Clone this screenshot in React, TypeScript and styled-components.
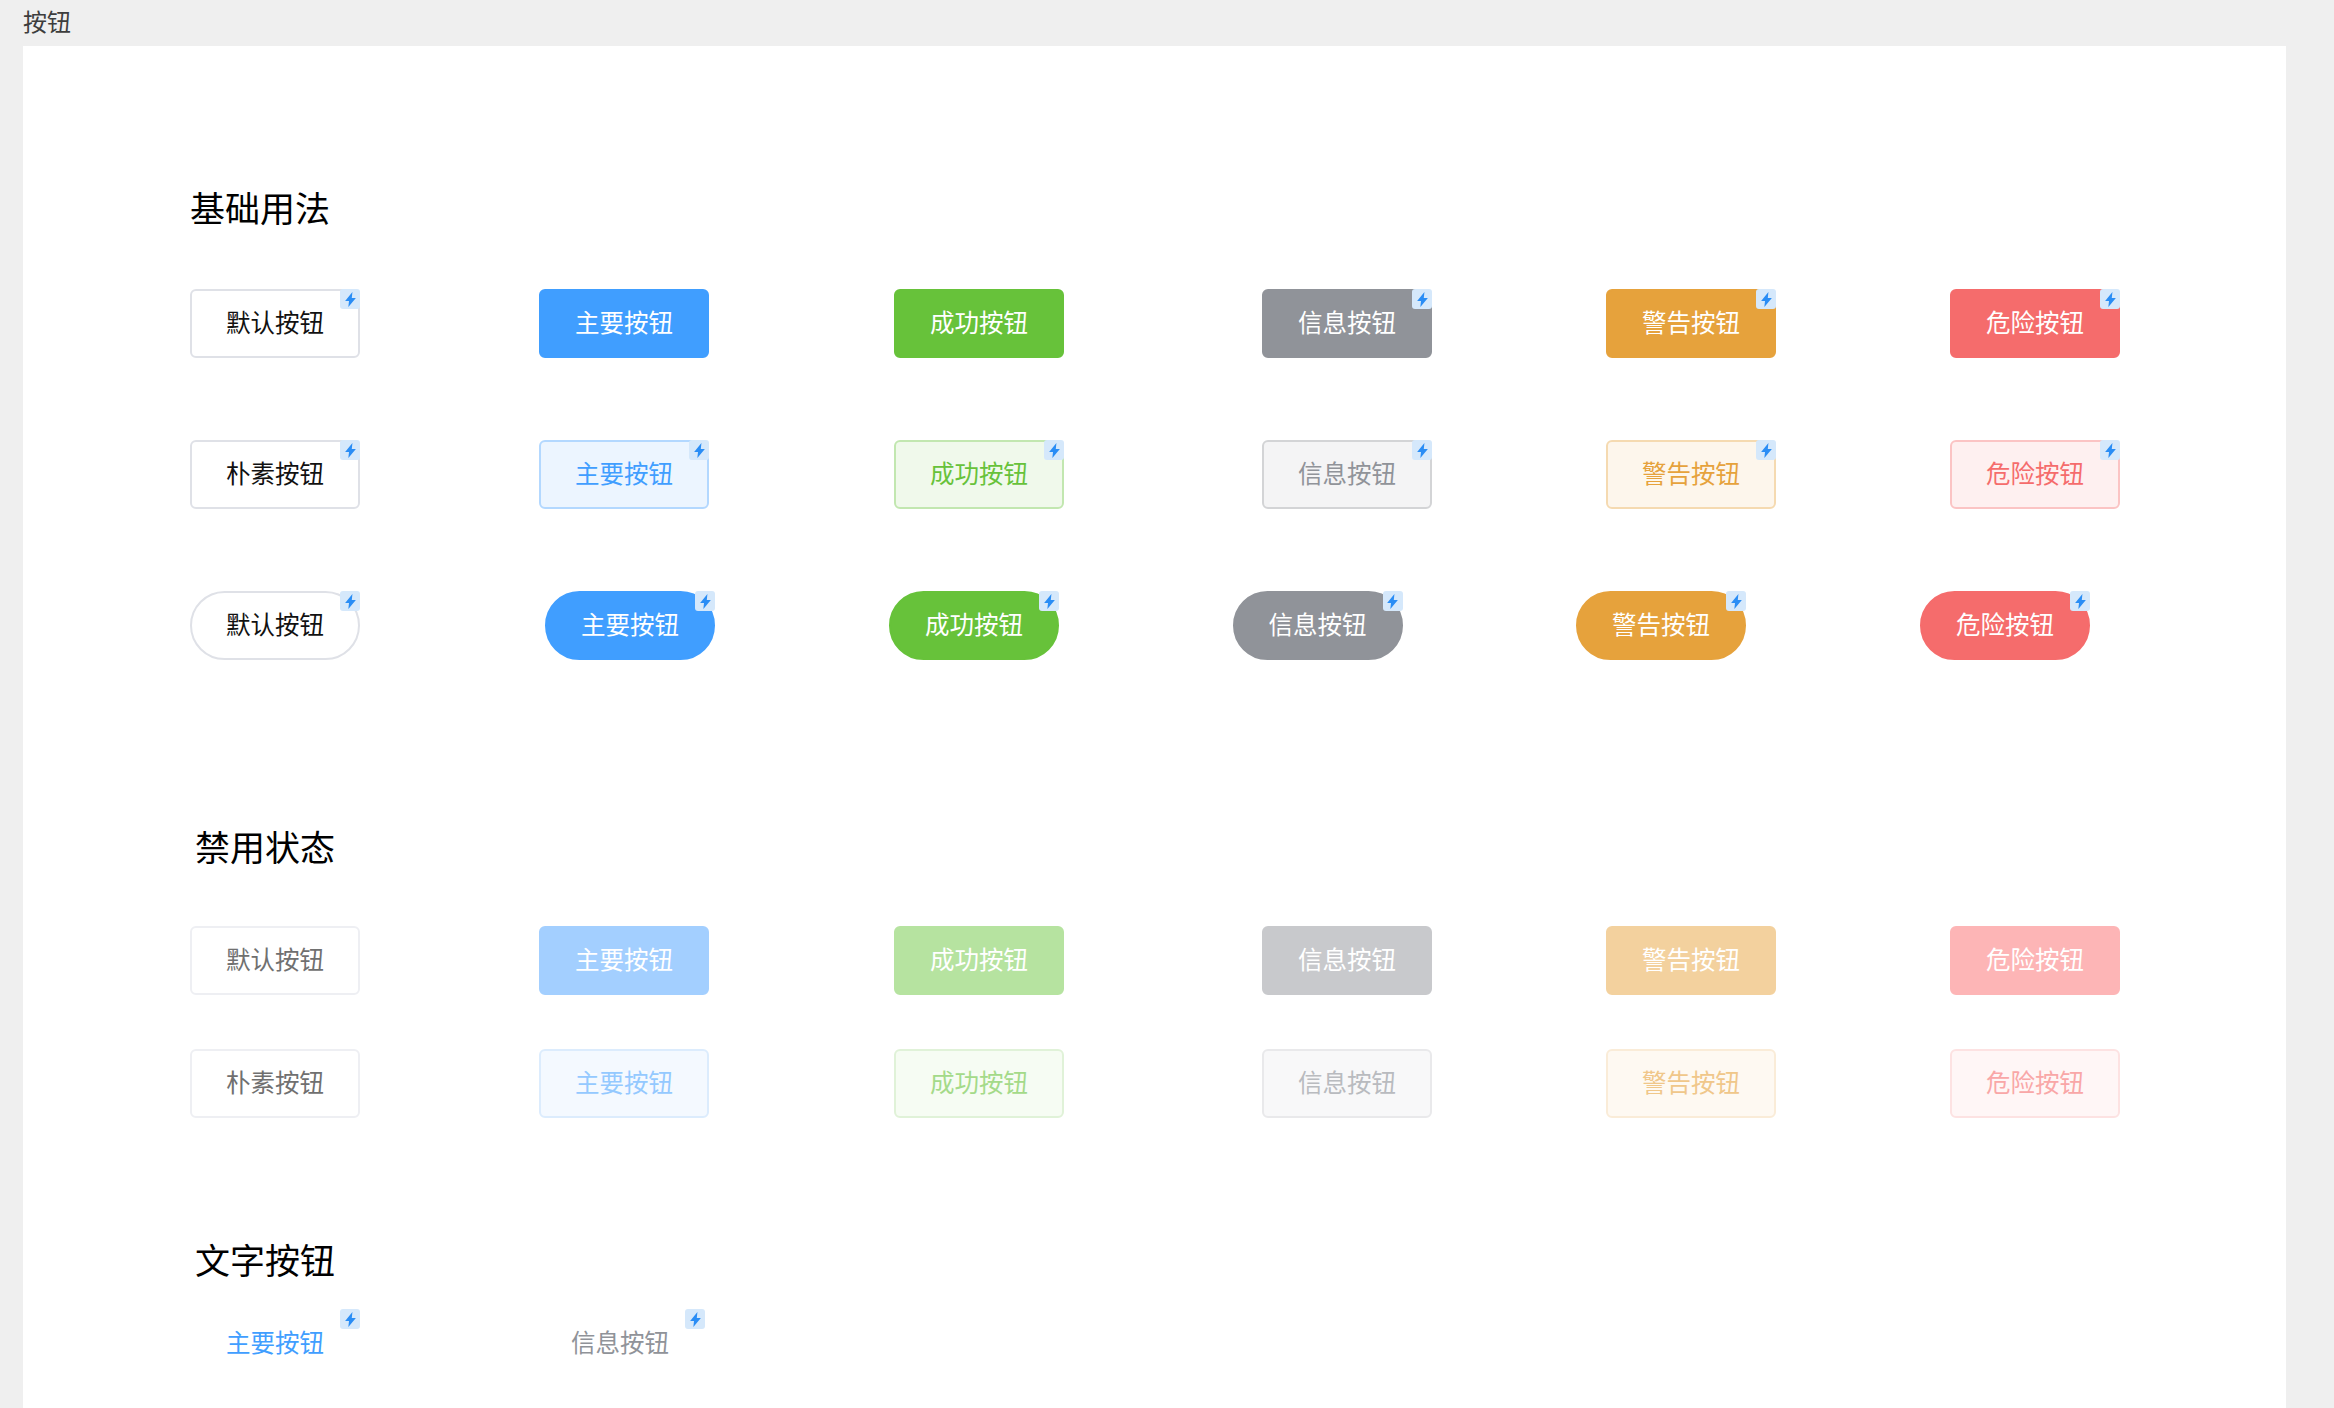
import React from "react";
import styled, { createGlobalStyle, css } from "styled-components";

const GlobalStyle = createGlobalStyle`
  html, body { margin: 0; padding: 0; background: #efefef; overflow: hidden; }
  body { font-family: "Noto Sans CJK SC", "Liberation Sans", sans-serif; }
`;

type Kind = "default" | "plainDefault" | "primary" | "success" | "info" | "warning" | "danger";
type Variant = "solid" | "plain" | "round" | "text";

interface Palette {
  main: string; soft: string; line: string; faded: string; fadedSoft: string; fadedLine: string; fadedText: string;
}

const palettes: Record<Kind, Palette> = {
  default: { main: "#111111", soft: "#ffffff", line: "#dfe1e7", faded: "#ffffff", fadedSoft: "#ffffff", fadedLine: "#eeeff3", fadedText: "#707070" },
  plainDefault: { main: "#111111", soft: "#ffffff", line: "#dfe1e7", faded: "#ffffff", fadedSoft: "#ffffff", fadedLine: "#eeeff3", fadedText: "#707070" },
  primary: { main: "#409eff", soft: "#ecf5ff", line: "#b3d8ff", faded: "#a3cfff", fadedSoft: "#f4f9ff", fadedLine: "#dcecfd", fadedText: "#94c9ff" },
  success: { main: "#67c23a", soft: "#f0f9eb", line: "#c2e7b0", faded: "#b6e3a0", fadedSoft: "#f6fcf3", fadedLine: "#e0f2d8", fadedText: "#a4da89" },
  info: { main: "#909399", soft: "#f4f4f5", line: "#d3d4d6", faded: "#c8c9cc", fadedSoft: "#f8f8f9", fadedLine: "#e9e9eb", fadedText: "#b9bbbf" },
  warning: { main: "#e6a23c", soft: "#fdf6ec", line: "#f5dab1", faded: "#f3d19e", fadedSoft: "#fef9f2", fadedLine: "#faecd8", fadedText: "#f0c78a" },
  danger: { main: "#f56c6c", soft: "#fef0f0", line: "#fbc4c4", faded: "#fdb5b6", fadedSoft: "#fff6f6", fadedLine: "#fde2e2", fadedText: "#f9a7a7" },
};

const Page = styled.div`
  width: 2334px;
  height: 1408px;
  overflow: hidden;
  background: #efefef;
`;

const PageHeader = styled.header`
  height: 46px;
  padding: 0 23px 6px;
  display: flex;
  align-items: center;
  font-size: 24px;
  color: #3d3d3d;
  box-sizing: border-box;
`;

const Card = styled.main`
  width: 2263px;
  height: 1362px;
  margin-left: 23px;
  padding: 137px 0 0 167px;
  box-sizing: border-box;
  background: #ffffff;
`;

const SectionTitle = styled.h2<{ $top?: number; $indent?: number }>`
  margin: ${(p) => p.$top ?? 0}px 0 0 ${(p) => p.$indent ?? 0}px;
  height: 48px;
  line-height: 48px;
  font-size: 35px;
  font-weight: 400;
  color: #000000;
`;

const ButtonRow = styled.div<{ $columns: string; $top: number }>`
  display: grid;
  grid-template-columns: ${(p) => p.$columns};
  margin-top: ${(p) => p.$top}px;
`;

const variantStyles = (kind: Kind, variant: Variant, off: boolean) => {
  const c = palettes[kind];
  if (variant === "text") {
    return css`
      background: transparent;
      border-color: transparent;
      color: ${c.main};
    `;
  }
  if (variant === "plain" || kind === "default" || kind === "plainDefault") {
    return css`
      background: ${off ? c.fadedSoft : c.soft};
      border-color: ${off ? c.fadedLine : c.line};
      color: ${off ? c.fadedText : c.main};
    `;
  }
  return css`
    background: ${off ? c.faded : c.main};
    border-color: ${off ? c.faded : c.main};
    color: #ffffff;
  `;
};

const ActionButton = styled.button<{ $kind: Kind; $variant: Variant; $off: boolean }>`
  position: relative;
  width: 170px;
  height: 69px;
  padding: 0 0 4px;
  border: 2px solid;
  border-radius: ${(p) => (p.$variant === "round" ? "34.5px" : "6px")};
  font-family: inherit;
  font-size: 24.5px;
  line-height: 32px;
  font-weight: 400;
  box-sizing: border-box;
  ${(p) => variantStyles(p.$kind, p.$variant, p.$off)}
`;

const Badge = styled.span`
  position: absolute;
  top: -2px;
  right: -2px;
  width: 20px;
  height: 20px;
  display: flex;
  align-items: center;
  justify-content: center;
  background: #d5e8fb;
  border-radius: 3px;
  color: #2a8df5;
`;

const Bolt = () => (
  <svg width="11" height="15" viewBox="0 0 10 14" aria-hidden="true">
    <path d="M6.8 0 L0 8.3 H3.6 L3 14 L10 5.6 H6.2 Z" fill="currentColor" />
  </svg>
);

interface ItemProps {
  kind: Kind;
  label: string;
  variant?: Variant;
  off?: boolean;
  bolt?: boolean;
}

const Item = ({ kind, label, variant = "solid", off = false, bolt = true }: ItemProps) => (
  <div>
    <ActionButton type="button" $kind={kind} $variant={variant} $off={off} disabled={off}>
      {label}
      {bolt && (
        <Badge>
          <Bolt />
        </Badge>
      )}
    </ActionButton>
  </div>
);

const GRID = "349px 355px 368px 344px 344px 170px";
const ROUND_GRID = "355px 344px 343.5px 343.5px 344px 170px";

const colourSet: { kind: Kind; label: string }[] = [
  { kind: "primary", label: "主要按钮" },
  { kind: "success", label: "成功按钮" },
  { kind: "info", label: "信息按钮" },
  { kind: "warning", label: "警告按钮" },
  { kind: "danger", label: "危险按钮" },
];

export default function App() {
  return (
    <Page>
      <GlobalStyle />
      <PageHeader>按钮</PageHeader>
      <Card>
        <SectionTitle>基础用法</SectionTitle>

        <ButtonRow $columns={GRID} $top={58}>
          <Item kind="default" label="默认按钮" />
          {colourSet.map((b) => (
            <Item key={b.kind} kind={b.kind} label={b.label} bolt={b.kind !== "primary" && b.kind !== "success"} />
          ))}
        </ButtonRow>

        <ButtonRow $columns={GRID} $top={82}>
          <Item kind="plainDefault" label="朴素按钮" />
          {colourSet.map((b) => (
            <Item key={b.kind} kind={b.kind} label={b.label} variant="plain" />
          ))}
        </ButtonRow>

        <ButtonRow $columns={ROUND_GRID} $top={82}>
          <Item kind="default" label="默认按钮" variant="round" />
          {colourSet.map((b) => (
            <Item key={b.kind} kind={b.kind} label={b.label} variant="round" />
          ))}
        </ButtonRow>

        <SectionTitle $top={162} $indent={5}>禁用状态</SectionTitle>

        <ButtonRow $columns={GRID} $top={56}>
          <Item kind="default" label="默认按钮" off bolt={false} />
          {colourSet.map((b) => (
            <Item key={b.kind} kind={b.kind} label={b.label} off bolt={false} />
          ))}
        </ButtonRow>

        <ButtonRow $columns={GRID} $top={54}>
          <Item kind="plainDefault" label="朴素按钮" off bolt={false} />
          {colourSet.map((b) => (
            <Item key={b.kind} kind={b.kind} label={b.label} variant="plain" off bolt={false} />
          ))}
        </ButtonRow>

        <SectionTitle $top={117} $indent={5}>文字按钮</SectionTitle>

        <ButtonRow $columns="345px 170px" $top={26}>
          <Item kind="primary" label="主要按钮" variant="text" />
          <Item kind="info" label="信息按钮" variant="text" />
        </ButtonRow>
      </Card>
    </Page>
  );
}
